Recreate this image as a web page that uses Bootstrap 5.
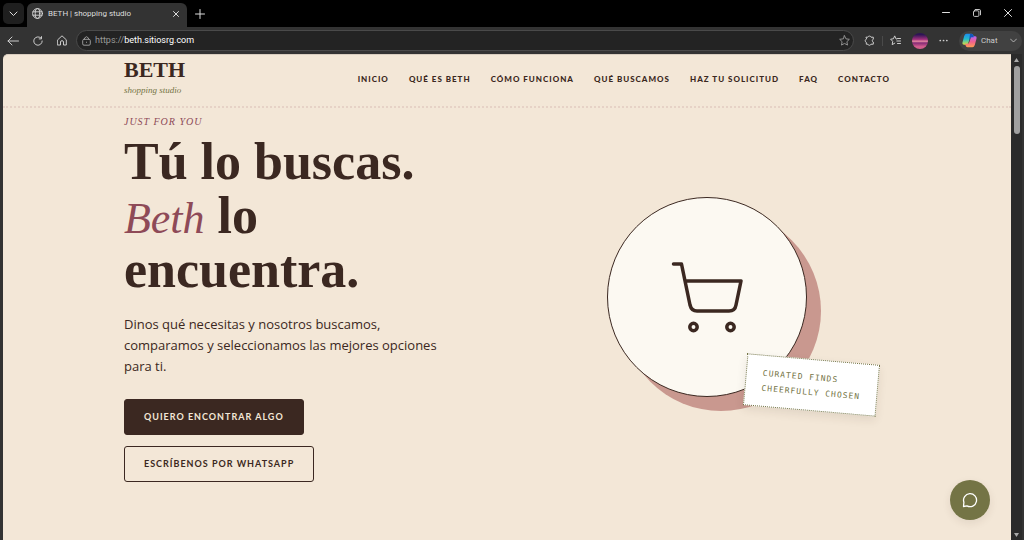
<!DOCTYPE html>
<html lang="es">
<head>
<meta charset="utf-8">
<meta name="viewport" content="width=device-width, initial-scale=1">
<title>BETH | shopping studio</title>
<link href="https://cdn.jsdelivr.net/npm/bootstrap@5.3.0/dist/css/bootstrap.min.css" rel="stylesheet">
<style>
:root{--ink:#3b2821;--cream:#f3e7d7;--olive:#747445;--wine:#8e4a57;--rose:#c9988f}
body{background:#333;font-family:Roboto,sans-serif;height:100vh;overflow:hidden}
button{background:none;border:0;padding:0;color:inherit}
svg{display:block;fill:none;stroke:currentColor;stroke-linecap:round;stroke-linejoin:round}
svg.filled{stroke:none;fill:#aaa}
/* browser frame */
.tabstrip{background:#000;height:27px;color:#ddd;padding:3px 12px 0 3px}
.tab-menu{width:21px;height:21px;background:#1f1f1f;border-radius:5px;place-items:center}
.tab-active{width:160px;height:24px;background:#333;border-radius:6px 6px 0 0;font-size:8px;padding:0 8px 3px 5px;margin-left:3px;gap:5px}
.strip-btn{margin-top:6px}
.window-controls{gap:23px;margin-top:6px}
.toolbar{height:27px;background:#333;color:#ccc;padding:0 2px 0 7px}
.nav-tools{gap:14px;margin-right:9px}
.address{height:21px;background:#232323;border:1px solid #4a4a4a;border-radius:11px;padding:0 3px 0 5px;font-size:9px;color:#999}
.address input{background:none;border:0;padding:0;color:#fff;outline:0;min-width:0}
.side-tools{gap:7px;margin-left:10px}
.avatar{width:16px;height:16px;border-radius:50%;background:linear-gradient(#2e1555 10%,#a0307c 40%,#e287a0 52%,#842a75 62%,#d15d8d 85%)}
.chat-pill{width:63px;height:20px;background:#414141;border-radius:10px;font-size:8px;padding:0 5px 0 3px;margin-left:4px}
.divider{width:1px;height:10px;background:#4a4a4a}
/* site */
.site{background:var(--cream);color:var(--ink);border-radius:5px 0 0 0;margin-left:3px;border-top:1px solid #d9cdbf}
.scroller{width:11px;background:#2b2b2b;margin-right:2px;padding:4px 0 3px}
.thumb{width:6px;height:68px;border-radius:3px;background:#a0a0a0}
.wrap{width:76%;max-width:1100px;margin:0 auto}
.site-head{border-bottom:2px dotted #e6d2c6}
.site-head .wrap{height:51px;padding-bottom:4px}
.serif{font-family:"Liberation Serif",serif}
.brand{color:var(--ink);text-decoration:none;font-size:22px;font-weight:700;line-height:22px}
.brand small{display:block;font-size:9px;font-style:italic;font-weight:400;line-height:18px;color:var(--olive)}
.menu{gap:20px}
.menu a{font:900 8px/16px Lato,sans-serif;letter-spacing:1px;color:var(--ink);text-decoration:none;text-transform:uppercase;white-space:nowrap}
.eyebrow{font-size:10px;font-style:italic;letter-spacing:1px;line-height:16px;color:var(--wine);margin:6px 0 5px}
h1{font-size:52px;font-weight:700;line-height:54px;margin:0 0 17px}
h1 em{font-size:44px;font-weight:400;color:var(--wine);line-height:44px}
.hero{--bs-gutter-x:2rem}
.intro{font:400 13px/21px "Open Sans",sans-serif;margin:0 0 22px}
.actions{gap:11px}
.cta{font:700 9px/14px Lato,sans-serif;letter-spacing:1px;border:1px solid var(--ink);border-radius:3px;padding:10px 19px;color:var(--ink);text-transform:uppercase;white-space:nowrap}
.cta-dark{background:var(--ink);color:var(--cream)}
.medal{width:200px;height:200px;border-radius:50%;border:1px solid var(--ink);background:#fcf9f2;box-shadow:14px 14px 0 var(--rose);place-items:center}
.sticker{position:absolute;right:-72px;bottom:-15px;transform:rotate(5deg);background:#fff;border:1px dotted var(--olive);padding:10px 16px;font:8px/15px "DejaVu Sans Mono",monospace;letter-spacing:1px;color:var(--olive);white-space:nowrap;box-shadow:0 4px 10px #3b282118}
.bubble{position:absolute;right:21px;bottom:20px;width:40px;height:40px;border-radius:50%;background:var(--olive);color:#fff;box-shadow:0 3px 8px #3b282118;place-items:center}
</style>
</head>
<body class="d-flex flex-column">
<div class="tabstrip d-flex align-items-start">
  <button class="tab-menu d-grid" aria-label="Pestañas"><svg width="9" height="9" viewBox="0 0 9 9"><path d="M1 3l3.500 3.500L8 3"/></svg></button>
  <div class="tab-active d-flex align-items-center">
    <svg width="11" height="11" viewBox="0 0 11 11" stroke-width=".9"><circle cx="5.500" cy="5.500" r="4.900"/><ellipse cx="5.500" cy="5.500" rx="2.300" ry="4.900"/><path d="M1 3.800h9M1 7.200h9"/></svg>
    <span>BETH | shopping studio</span>
    <button class="ms-auto" aria-label="Cerrar pestaña"><svg width="6" height="6" viewBox="0 0 6 6"><path d="M.5.5l5 5M5.500.5l-5 5"/></svg></button>
  </div>
  <button class="strip-btn ms-2" aria-label="Nueva pestaña"><svg width="10" height="10" viewBox="0 0 10 10"><path d="M5 .5v9M.5 5h9"/></svg></button>
  <div class="window-controls ms-auto d-flex align-items-center">
    <button aria-label="Minimizar"><svg width="8" height="8" viewBox="0 0 8 8"><path d="M.5 3.500h7"/></svg></button>
    <button aria-label="Restaurar"><svg width="8" height="8" viewBox="0 0 8 8" stroke-width=".9"><rect x=".5" y="1.800" width="5.400" height="5.600" rx="1"/><path d="M2.200.5h4q1.300 0 1.300 1.300v4"/></svg></button>
    <button aria-label="Cerrar"><svg width="8" height="8" viewBox="0 0 8 8"><path d="M.5.500l7 7M7.500.500l-7 7"/></svg></button>
  </div>
</div>
<div class="toolbar d-flex align-items-center">
  <div class="nav-tools d-flex align-items-center">
    <button aria-label="Atrás"><svg width="12" height="10" viewBox="0 0 12 10"><path d="M11.500 5H1M5 1L1 5l4 4"/></svg></button>
    <button aria-label="Recargar"><svg width="10" height="10" viewBox="0 0 10 10"><path d="M9.200 5a4.200 4.200 0 1 1-1.500-3.200M8.500.6v2.300H6.200"/></svg></button>
    <button aria-label="Inicio"><svg width="10" height="11" viewBox="0 0 10 11"><path d="M.7 4.800L5 .8l4.300 4V10H6.500V7q0-1.300-1.500-1.300T3.500 7v3H.7z"/></svg></button>
  </div>
  <div class="address d-flex align-items-center flex-grow-1">
    <svg class="me-1" width="9" height="10" viewBox="0 0 9 10"><rect x=".7" y="3.300" width="7.600" height="5.900" rx="1.300"/><path d="M2.500 3V2q2-2.600 4 0v1M4.500 6.100v.3"/></svg>
    <label for="url">https://</label><input id="url" class="flex-grow-1" value="beth.sitiosrg.com">
    <button aria-label="Favorito"><svg width="11" height="11" viewBox="0 0 12 12"><path d="M6 .8l1.600 3.400 3.700.5-2.700 2.600.7 3.700L6 9.200 2.700 11l.7-3.700L.7 4.700l3.700-.5z"/></svg></button>
  </div>
  <div class="side-tools d-flex align-items-center">
    <button aria-label="Extensiones"><svg width="11" height="11" viewBox="0 0 11 11"><path d="M2.300 2.200h1.500a1.700 1.700 0 0 1 3.200 0h2.300v2.100a1.400 1.400 0 0 0 0 2.700v2.200H7a1.700 1.700 0 0 1-3.200 0H2.300V7.300a1.700 1.700 0 0 1 0-3.200z"/></svg></button>
    <span class="divider"></span>
    <button class="me-1" aria-label="Favoritos"><svg width="11" height="11" viewBox="0 0 11 11"><path d="M6.800 4L6 3.900 4.700.9 3.400 3.800.6 4.200l2.100 2.100-.5 3.400 2.600-1.600M7.500 3.500h3M6.800 6h3.700M7.500 8.500h3"/></svg></button>
    <button class="avatar" aria-label="Perfil"></button>
    <button class="ms-1" aria-label="Más"><svg width="9" height="3" viewBox="0 0 9 3" stroke-width="1.700"><path d="M1.200 1.500h.1M4.500 1.500h.1M7.800 1.500h.1"/></svg></button>
    <button class="chat-pill d-flex align-items-center">
      <svg class="filled" width="15" height="15" viewBox="0 0 15 15"><defs><linearGradient id="g1" x2="0" y2="1"><stop stop-color="#1d8cf0"/><stop offset=".5" stop-color="#25bdc8"/><stop offset="1" stop-color="#d8df3f"/></linearGradient><linearGradient id="g2" x2="0" y2="1"><stop stop-color="#b668f4"/><stop offset=".5" stop-color="#f0608f"/><stop offset="1" stop-color="#ff9d52"/></linearGradient></defs><path fill="url(#g1)" d="M4.500.7h5q1.500 0 2 2l.4 1.500H9.400Q8 4.200 7.600 6L6.300 10q-.5 1.700-2 1.700H2Q-.2 11.700.6 9l1.600-6Q3 .7 4.500.7z"/><path fill="url(#g2)" d="M10.500 14.300h-5q-1.500 0-2-2l-.4-1.500h2.500q1.400 0 1.800-1.800L8.700 5q.5-1.700 2-1.700H13q2.200 0 1.400 2.700l-1.600 6q-.8 2.300-2.300 2.300z"/><path fill="#1656bd" d="M8 1h2q1 0 1.500 2l.3 1.200H9.400Q8.200 4.300 7.700 6L7 8z"/></svg>
      <span class="ms-1">Chat</span>
      <svg class="ms-auto" width="7" height="5" viewBox="0 0 7 5" stroke-width=".8"><path d="M.5 1l3 3 3-3"/></svg>
    </button>
  </div>
</div>
<div class="d-flex flex-grow-1 overflow-hidden">
  <div class="site flex-grow-1 position-relative overflow-hidden">
    <header class="site-head">
      <nav class="wrap d-flex justify-content-between align-items-center">
        <a class="brand serif" href="#">BETH<small>shopping studio</small></a>
        <div class="menu d-flex">
          <a href="#">Inicio</a><a href="#">Qué es Beth</a><a href="#">Cómo funciona</a><a href="#">Qué buscamos</a><a href="#">Haz tu solicitud</a><a href="#">FAQ</a><a href="#">Contacto</a>
        </div>
      </nav>
    </header>
    <main class="wrap">
      <div class="row hero">
        <div class="col-6 pb-1">
          <p class="eyebrow serif">JUST FOR YOU</p>
          <h1 class="serif">Tú lo buscas.<br><em>Beth</em> lo<br>encuentra.</h1>
          <p class="intro">Dinos qué necesitas y nosotros buscamos,<br>comparamos y seleccionamos las mejores opciones<br>para ti.</p>
          <div class="actions d-flex flex-column align-items-start">
            <button class="cta cta-dark">Quiero encontrar algo</button>
            <button class="cta">Escríbenos por WhatsApp</button>
          </div>
        </div>
        <div class="col-6 d-flex justify-content-center align-items-center">
          <div class="medal position-relative d-grid">
            <svg width="72" height="72" viewBox="0 0 72 72" stroke-width="3.500"><path d="M2.500 3h8l8.500 41q1.500 6 7 6h32q6 0 7-6l5-24H14"/><circle cx="22.500" cy="66" r="3.700"/><circle cx="59.500" cy="66" r="3.700"/></svg>
            <div class="sticker">CURATED FINDS<br>CHEERFULLY CHOSEN</div>
          </div>
        </div>
      </div>
    </main>
    <button class="bubble d-grid" aria-label="Chat"><svg width="16" height="16" viewBox="0 0 16 16" stroke-width="1.300"><path d="M1.500 14.500l.4-4.200A6.500 6.500 0 1 1 5 13.900z"/></svg></button>
  </div>
  <div class="scroller d-flex flex-column align-items-center">
    <svg class="filled" width="5" height="4" viewBox="0 0 5 4"><path d="M2.500 0L5 4H0z"/></svg>
    <div class="thumb mt-1"></div>
    <svg class="filled mt-auto" width="5" height="4" viewBox="0 0 5 4"><path d="M2.500 4L5 0H0z"/></svg>
  </div>
</div>
<script src="https://cdn.jsdelivr.net/npm/bootstrap@5.3.0/dist/js/bootstrap.bundle.min.js"></script>
</body>
</html>
